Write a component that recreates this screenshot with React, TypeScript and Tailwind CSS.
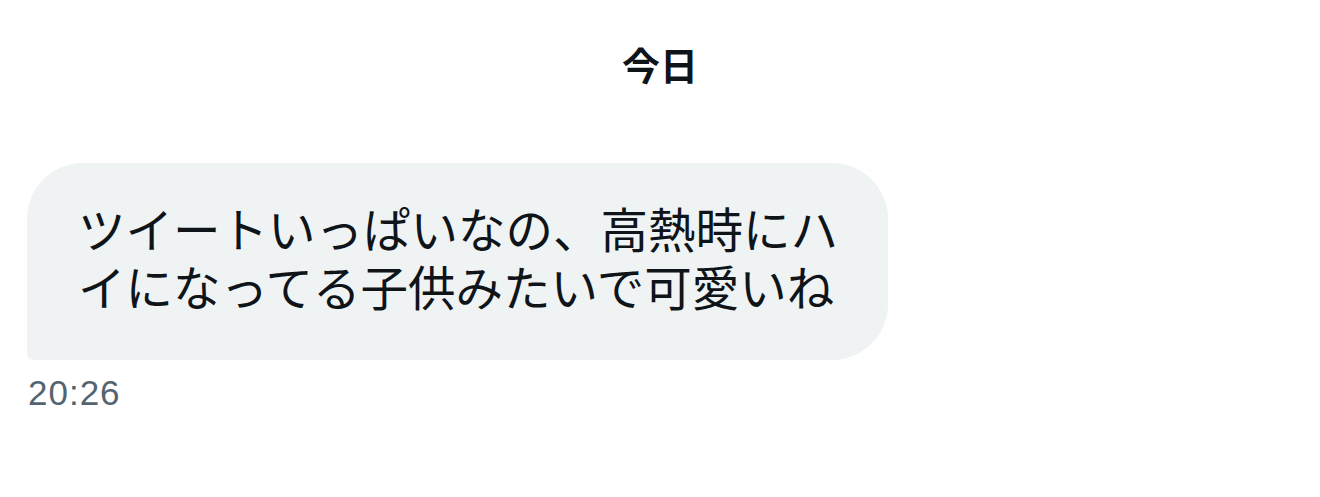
export default function App() {
  return (
    <div className="w-[1320px] h-[497px] bg-white overflow-hidden">
      <div className="pt-[42px] flex justify-center">
        <div className="text-[38px] leading-[44px] font-bold text-[#0f1419] [font-family:'Noto_Sans_CJK_JP',sans-serif]">今日</div>
      </div>
      <div className="pl-[27px] pt-[77px]">
        <div className="w-[861px] h-[197px] bg-[#eff3f4] rounded-[56px] rounded-bl-[6px] pl-[51px] pr-[30px] pb-[9px] flex flex-col justify-center">
          <div className="text-[47.5px] leading-[58px] text-[#0f1419] whitespace-nowrap [font-family:'Noto_Sans_CJK_JP',sans-serif]">
            <div>ツイートいっぱいなの、高熱時にハ</div>
            <div>イになってる子供みたいで可愛いね</div>
          </div>
        </div>
        <div className="mt-[13px] pl-[1px] text-[35px] leading-[40px] tracking-[1px] text-[#536471] [font-family:'Liberation_Sans',sans-serif]">20:26</div>
      </div>
    </div>
  );
}
